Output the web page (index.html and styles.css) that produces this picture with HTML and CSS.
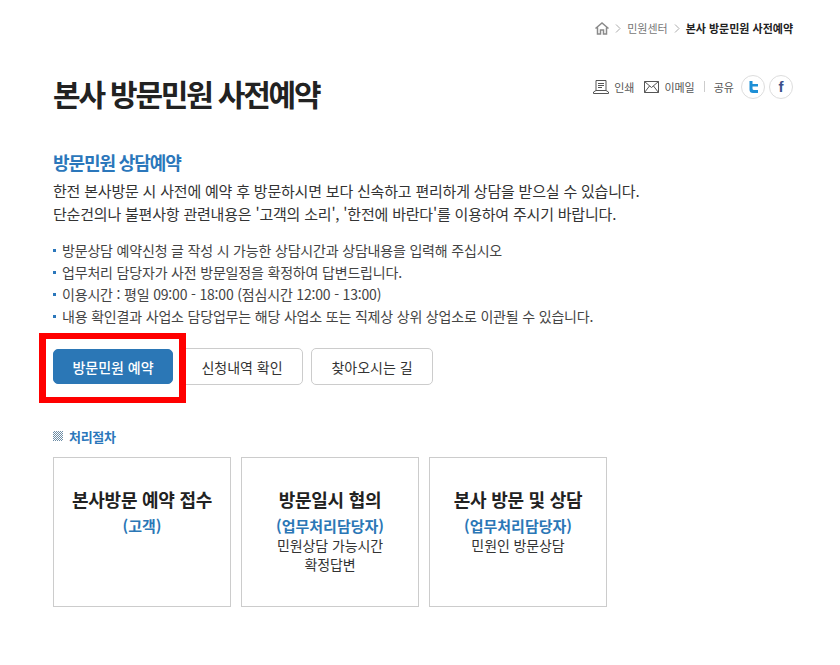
FILE: index.html
```html
<!DOCTYPE html>
<html lang="ko">
<head>
<meta charset="utf-8">
<title>본사 방문민원 사전예약</title>
<link rel="stylesheet" href="styles.css">
</head>
<body>
<div class="page">
  <nav class="crumbs">
    <svg class="home" width="14" height="13" viewBox="0 0 14 13"><path d="M0.5 6.500 7 1l6.500 5.500M2.500 5.500V12H5.500V8H8.500V12H11.500V5.500" fill="none" stroke="#8a8a8a" stroke-width="1.500"/></svg>
    <svg class="chev" width="6" height="9" viewBox="0 0 6 9"><path d="M1 .5 5 4.500 1 8.500" fill="none" stroke="#aaa"/></svg>
    <span>민원센터</span>
    <svg class="chev" width="6" height="9" viewBox="0 0 6 9"><path d="M1 .5 5 4.500 1 8.500" fill="none" stroke="#aaa"/></svg>
    <b>본사 방문민원 사전예약</b>
  </nav>
  <header class="head">
    <h1>본사 방문민원 사전예약</h1>
    <div class="tools">
      <svg width="16" height="14" viewBox="0 0 16 14"><path d="M3 .5H13V10.500H3ZM5 3.500H11M5 5.500H11M5 7.500H9M3 10.500 .5 12V13.500H15.500V12L13 10.500" fill="none" stroke="#555"/></svg>
      <span class="tool">인쇄</span>
      <svg class="gap" width="15" height="12" viewBox="0 0 15 12"><path d="M.5 .5H14.500V11.500H.5ZM.5 .5 7.500 6.500 14.500 .5M.5 11.500 5.500 5M14.500 11.500 9.500 5" fill="none" stroke="#555"/></svg>
      <span class="tool">이메일</span>
      <i class="sep"></i>
      <span class="tool">공유</span>
      <span class="social tw"><svg width="11" height="12" viewBox="0 0 11 12"><path d="M1.500 0H4.500V3H10V5.500H4.500V7.500Q4.500 9 6 9H10V12H5Q1.500 12 1.500 8.500Z" fill="#1d8fd6"/></svg></span>
      <span class="social fb">f</span>
    </div>
  </header>
  <h2>방문민원 상담예약</h2>
  <p class="intro">한전 본사방문 시 사전에 예약 후 방문하시면 보다 신속하고 편리하게 상담을 받으실 수 있습니다.<br>단순건의나 불편사항 관련내용은 '고객의 소리', '한전에 바란다'를 이용하여 주시기 바랍니다.</p>
  <ul class="notes">
    <li>방문상담 예약신청 글 작성 시 가능한 상담시간과 상담내용을 입력해 주십시오</li>
    <li>업무처리 담당자가 사전 방문일정을 확정하여 답변드립니다.</li>
    <li>이용시간 : 평일 09:00 - 18:00 (점심시간 12:00 - 13:00)</li>
    <li>내용 확인결과 사업소 담당업무는 해당 사업소 또는 직제상 상위 상업소로 이관될 수 있습니다.</li>
  </ul>
  <div class="actions">
    <a class="btn primary">방문민원 예약</a>
    <a class="btn">신청내역 확인</a>
    <a class="btn">찾아오시는 길</a>
    <span class="highlight"></span>
  </div>
  <h3><i class="mark"></i>처리절차</h3>
  <div class="steps">
    <section class="step"><h4>본사방문 예약 접수</h4><strong>(고객)</strong></section>
    <section class="step"><h4>방문일시 협의</h4><strong>(업무처리담당자)</strong><p>민원상담 가능시간<br>확정답변</p></section>
    <section class="step"><h4>본사 방문 및 상담</h4><strong>(업무처리담당자)</strong><p>민원인 방문상담</p></section>
  </div>
</div>
</body>
</html>
```
FILE: styles.css
```css
* { box-sizing: border-box; }
html, body { margin: 0; background: #fff; }
body { font-family: "Noto Sans CJK KR", "Noto Sans", sans-serif; color: #333; }
.page { width: 840px; height: 665px; padding: 19px 47px 0 53px; overflow: hidden; }
.crumbs { display: flex; justify-content: flex-end; align-items: center; height: 18px; font-size: 11px; color: #777; }
.crumbs .home { margin-right: 6px; }
.crumbs .chev { margin-right: 6px; }
.crumbs span { margin-right: 6px; }
.crumbs b { color: #222; font-weight: 700; }
.head { display: flex; justify-content: space-between; align-items: flex-start; margin-top: 28px; height: 85px; }
h1 { margin: 0; font-size: 30px; line-height: 56px; font-weight: 700; color: #222; letter-spacing: -2.2px; }
.tools { display: flex; align-items: center; margin-top: 8px; padding-top: 1px; height: 26px; font-size: 11px; color: #555; }
.tool { margin-left: 5px; }
.gap { margin-left: 10px; }
.sep { width: 1px; height: 11px; background: #ccc; margin: 0 4px 0 9px; }
.social { display: flex; align-items: center; justify-content: center; width: 24px; height: 24px; margin-left: 5px; border: 1px solid #ddd; border-radius: 50%; }
.social.tw { margin-left: 7px; }
.social.fb { font: 700 15px "Liberation Sans", sans-serif; color: #3b4f8a; margin-left: 4px; }
h2 { margin: 0; font-size: 18px; line-height: 24px; font-weight: 700; color: #2b77bb; letter-spacing: -1.1px; }
.intro { margin: 5px 0 0; font-size: 15px; line-height: 23px; color: #333; letter-spacing: -0.2px; }
.notes { list-style: none; margin: 14px 0 0; padding: 0; font-size: 14px; line-height: 22px; color: #444; letter-spacing: -0.18px; }
.notes li { padding-left: 9px; position: relative; }
.notes li::before { content: ""; position: absolute; left: 0; top: 10px; width: 3px; height: 3px; background: #2b77bb; }
.actions { position: relative; display: flex; align-items: center; gap: 8px; margin-top: 21px; }
.btn { display: flex; align-items: center; justify-content: center; width: 122px; height: 37px; border: 1px solid #ccc; border-radius: 5px; font-size: 14px; color: #333; background: #fff; }
.btn.primary { width: 120px; height: 35px; background: #2b77b6; border-color: #2b77b6; color: #fff; font-weight: 500; }
.highlight { position: absolute; left: -14px; top: -15px; width: 147px; height: 70px; border-style: solid; border-color: #f00; border-width: 6px 7px; }
h3 { display: flex; align-items: center; margin: 42px 0 0; height: 18px; font-size: 13px; font-weight: 700; color: #2b77bb; letter-spacing: -0.3px; }
.mark { width: 10px; height: 10px; margin-right: 6px; background: repeating-conic-gradient(#6d8da6 0 25%, #fff 0 50%) 0 0 / 2px 2px; }
.steps { display: flex; gap: 10px; margin-top: 12px; }
.step { width: 178px; height: 150px; border: 1px solid #ccc; padding-top: 26px; text-align: center; }
h4 { margin: 0; font-size: 18px; line-height: 30px; font-weight: 700; color: #222; letter-spacing: -0.25px; }
.step strong { display: block; font-size: 15px; line-height: 21px; font-weight: 700; color: #2b77b6; margin-top: 1px; }
.step p { margin: 0; font-size: 14px; line-height: 19px; color: #333; letter-spacing: -0.1px; }
```
